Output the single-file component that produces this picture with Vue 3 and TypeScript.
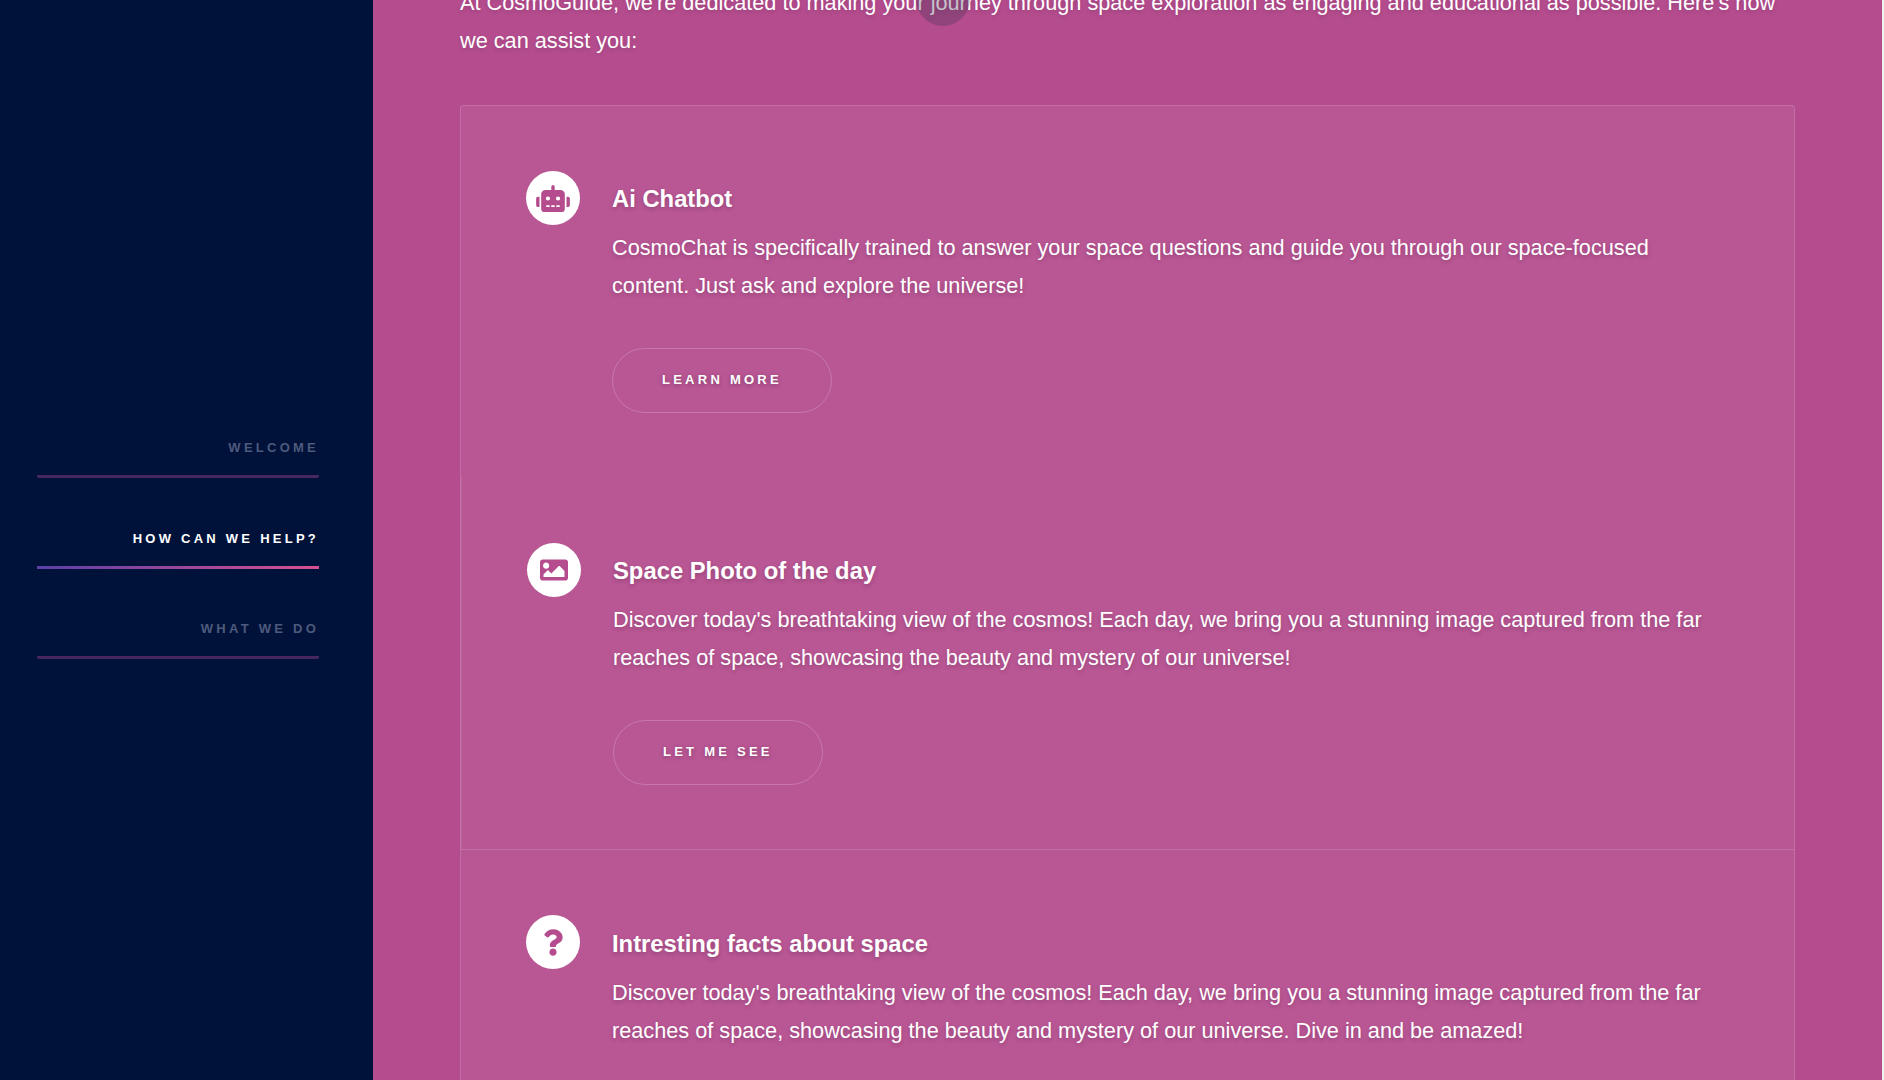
<script setup lang="ts">
interface NavItem {
  label: string
  active?: boolean
}

interface Service {
  kind: 'bot' | 'photo' | 'question'
  title: string
  text: string
  action?: string
}

const nav: NavItem[] = [
  { label: 'Welcome' },
  { label: 'How can we help?', active: true },
  { label: 'What we do' }
]

const services: Service[] = [
  {
    kind: 'bot',
    title: 'Ai Chatbot',
    text: 'CosmoChat is specifically trained to answer your space questions and guide you through our space-focused content. Just ask and explore the universe!',
    action: 'Learn more'
  },
  {
    kind: 'photo',
    title: 'Space Photo of the day',
    text: "Discover today's breathtaking view of the cosmos! Each day, we bring you a stunning image captured from the far reaches of space, showcasing the beauty and mystery of our universe!",
    action: 'Let me see'
  },
  {
    kind: 'question',
    title: 'Intresting facts about space',
    text: "Discover today's breathtaking view of the cosmos! Each day, we bring you a stunning image captured from the far reaches of space, showcasing the beauty and mystery of our universe. Dive in and be amazed!"
  }
]
</script>

<template>
  <div class="page">
    <aside class="sidebar">
      <nav class="nav">
        <a v-for="item in nav" :key="item.label" class="nav-link" :class="{ active: item.active }" href="#">
          {{ item.label }}
        </a>
      </nav>
    </aside>

    <main class="main">
      <span class="cursor"></span>
      <p class="intro">
        At CosmoGuide, we're dedicated to making your journey through space exploration as engaging and educational as possible. Here's how we can assist you:
      </p>

      <section class="panel">
        <article v-for="s in services" :key="s.title" class="service" :class="s.kind">
          <div class="icon">
            <svg v-if="s.kind === 'bot'" viewBox="0 0 640 512" width="34" height="27">
              <path fill="currentColor" d="M32,224H64V416H32A31.96,31.96,0,0,1,0,384V256A31.96,31.96,0,0,1,32,224Zm512-48V448a64.063,64.063,0,0,1-64,64H160a64.063,64.063,0,0,1-64-64V176a79.974,79.974,0,0,1,80-80H288V32a32,32,0,0,1,64,0V96H464A79.974,79.974,0,0,1,544,176ZM264,256a40,40,0,1,0-40,40A39.997,39.997,0,0,0,264,256Zm-8,128H192v32h64Zm96,0H288v32h64ZM456,256a40,40,0,1,0-40,40A39.997,39.997,0,0,0,456,256Zm-8,128H384v32h64ZM640,256V384a31.96,31.96,0,0,1-32,32H576V224h32A31.96,31.96,0,0,1,640,256Z" />
            </svg>
            <svg v-else-if="s.kind === 'photo'" viewBox="0 0 512 512" width="28" height="28">
              <path fill="currentColor" d="M464 448H48c-26.510 0-48-21.490-48-48V112c0-26.510 21.490-48 48-48h416c26.510 0 48 21.490 48 48v288c0 26.510-21.490 48-48 48zM112 120c-30.928 0-56 25.072-56 56s25.072 56 56 56 56-25.072 56-56-25.072-56-56-56zM64 384h384V272l-87.515-87.515c-4.686-4.686-12.284-4.686-16.971 0L208 320l-55.515-55.515c-4.686-4.686-12.284-4.686-16.971 0L64 336v48z" />
            </svg>
            <svg v-else viewBox="0 0 384 512" width="20" height="27">
              <path fill="currentColor" d="M202.021 0C122.202 0 70.503 32.703 29.914 91.026c-7.363 10.580-5.093 25.086 5.178 32.874l43.138 32.709c10.373 7.865 25.132 6.026 33.253-4.148 25.049-31.381 43.630-49.449 82.757-49.449 30.764 0 68.816 19.799 68.816 49.631 0 22.552-18.617 34.134-48.993 51.164-35.423 19.859-82.299 44.573-82.299 106.394V320c0 13.255 10.745 24 24 24h72.471c13.255 0 24-10.745 24-24v-5.773c0-42.854 125.251-44.639 125.251-160.227C377.506 67.049 285.425 0 202.021 0zM192 373.134c-38.191 0-69.262 31.071-69.262 69.262 0 38.190 31.071 69.261 69.262 69.261s69.262-31.071 69.262-69.262-31.071-69.261-69.262-69.261z" />
            </svg>
          </div>
          <div class="body">
            <h3 class="title">{{ s.title }}</h3>
            <p class="text">{{ s.text }}</p>
            <a v-if="s.action" class="btn" href="#">{{ s.action }}</a>
          </div>
        </article>
      </section>
    </main>
    <div class="scroll-edge"></div>
  </div>
</template>

<style>
html,
body {
  margin: 0;
  height: 100%;
  overflow: hidden;
}
</style>

<style scoped>
.page {
  display: flex;
  height: 1080px;
  overflow: hidden;
  font-family: "Liberation Sans", Arial, sans-serif;
  color: #fff;
}

.sidebar {
  width: 373px;
  flex: none;
  background: #00123a;
  display: flex;
  flex-direction: column;
  padding: 433px 54px 0 37px;
  box-sizing: border-box;
}

.nav {
  display: flex;
  flex-direction: column;
  gap: 45.5px;
}

.nav-link {
  display: block;
  text-align: right;
  text-decoration: none;
  text-transform: uppercase;
  font-size: 13px;
  font-weight: 700;
  letter-spacing: 3.25px;
  line-height: 30px;
  height: 42px;
  color: #4d5a7c;
  border-bottom: 3px solid #46275f;
  border-radius: 2px;
}

.nav-link.active {
  color: #fff;
  border-image: linear-gradient(90deg, #5a3fa8, #d9508f) 1;
}

.main {
  position: relative;
  flex: 1;
  min-width: 0;
  background: #b54c8e;
  padding: 0 87px;
  box-sizing: border-box;
}

.cursor {
  position: absolute;
  left: 543px;
  top: -28px;
  width: 54px;
  height: 54px;
  border-radius: 50%;
  background: rgba(60, 50, 80, 0.3);
}

.intro {
  margin: -16px 0 45px;
  font-size: 21.7px;
  line-height: 38px;
  text-shadow: 0 2px 4px rgba(0, 0, 0, 0.15);
}

.panel {
  background: rgba(255, 255, 255, 0.06);
  border: 1px solid rgba(255, 255, 255, 0.15);
  border-radius: 4px 4px 0 0;
}

.service {
  display: flex;
  padding: 65px 80px 0 65px;
  height: 372px;
  box-sizing: border-box;
  gap: 32px;
}

.service.photo {
  border-left: 1px solid rgba(255, 255, 255, 0.1);
  border-bottom: 1px solid rgba(255, 255, 255, 0.15);
}

.icon {
  width: 54px;
  height: 54px;
  flex: none;
  border-radius: 50%;
  background: #fff;
  color: #b54c8e;
  display: flex;
  align-items: center;
  justify-content: center;
}

.body {
  min-width: 0;
}

.title {
  margin: 13px 0 15px;
  font-size: 23.8px;
  line-height: 30px;
  font-weight: 700;
  text-shadow: 0 2px 4px rgba(0, 0, 0, 0.2);
}

.service.question .title {
  margin: 14px 0 15px;
}

.text {
  margin: 0;
  font-size: 21.7px;
  line-height: 38px;
  text-shadow: 0 2px 4px rgba(0, 0, 0, 0.2);
}

.btn {
  display: inline-block;
  margin-top: 43px;
  padding: 0 49px 2px;
  line-height: 61px;
  text-decoration: none;
  text-transform: uppercase;
  font-size: 13px;
  font-weight: 700;
  letter-spacing: 3.25px;
  color: #fff;
  border: 1px solid rgba(255, 255, 255, 0.2);
  border-radius: 33px;
  text-shadow: 0 1px 4px rgba(0, 0, 0, 0.3);
}

.scroll-edge {
  width: 2px;
  flex: none;
  background: #f1f1f1;
}
</style>
